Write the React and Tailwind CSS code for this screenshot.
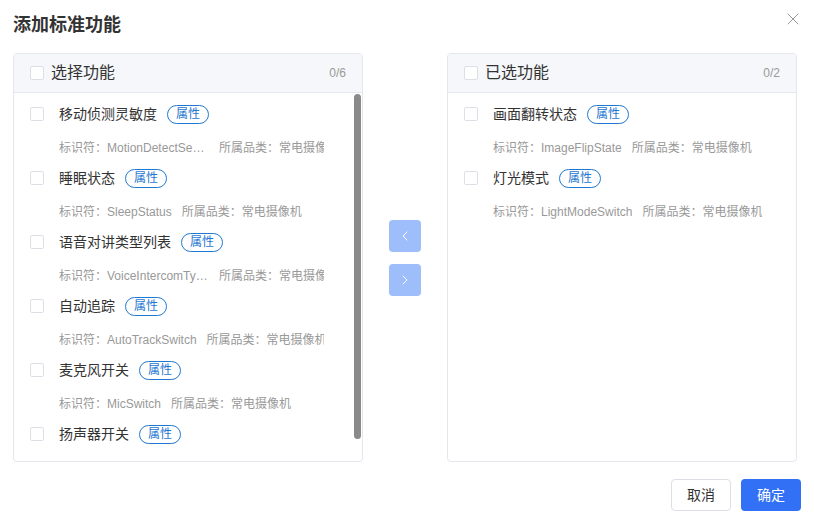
import React from 'react';
import { X, ChevronLeft, ChevronRight } from 'lucide-react';

const leftItems = [
  { name: '移动侦测灵敏度', id: 'MotionDetectSensitivity' },
  { name: '睡眠状态', id: 'SleepStatus' },
  { name: '语音对讲类型列表', id: 'VoiceIntercomTypeList' },
  { name: '自动追踪', id: 'AutoTrackSwitch' },
  { name: '麦克风开关', id: 'MicSwitch' },
  { name: '扬声器开关', id: 'SpeakerSwitch' },
];

const rightItems = [
  { name: '画面翻转状态', id: 'ImageFlipState' },
  { name: '灯光模式', id: 'LightModeSwitch' },
];

function Checkbox() {
  return <span className="w-[14px] h-[14px] shrink-0 rounded-[2px] border border-[#dcdfe6] bg-white" />;
}

function Item({ item, clip }) {
  return (
    <div className="h-[64px]">
      <div className="h-8 flex items-center">
        <Checkbox />
        <span className="ml-[15px] text-[14px] text-[#333]">{item.name}</span>
        <span className="ml-[10px] h-[19px] px-[8px] flex items-center rounded-full border border-[#1f78d1] text-[12px] text-[#1f78d1]">
          属性
        </span>
      </div>
      <div className="pt-1 h-8 flex items-center pl-[29px]">
        <div className={`flex items-center whitespace-nowrap overflow-hidden text-[12px] text-[#999] ${clip ? 'w-[265px]' : ''}`}>
          <span className="shrink-0">标识符：</span>
          <span className="shrink-0 max-w-[102px] truncate">{item.id}</span>
          <span className="shrink-0 ml-[10px]">所属品类：常电摄像机</span>
        </div>
      </div>
    </div>
  );
}

function Panel({ title, count, items, scroll }) {
  return (
    <div className="w-[350px] h-[409px] border border-[#e4e7ed] rounded-[4px] flex flex-col overflow-hidden relative">
      <div className="h-[39px] shrink-0 bg-[#f5f7fa] border-b border-[#e4e7ed] flex items-center px-4">
        <Checkbox />
        <span className="ml-[7px] text-[16px] text-[#333]">{title}</span>
        <span className="ml-auto text-[12px] text-[#999]">{count}</span>
      </div>
      <div className="flex-1 overflow-hidden pt-[5px] px-4">
        {items.map((it) => (
          <Item key={it.id} item={it} clip={scroll} />
        ))}
      </div>
      {scroll && (
        <div className="absolute right-[1px] top-[40px] w-[7px] h-[345px] rounded-full bg-[#8a8a8a]" />
      )}
    </div>
  );
}

export default function App() {
  return (
    <div
      className="w-[814px] h-[524px] bg-white flex flex-col"
      style={{ fontFamily: '"Liberation Sans", "Noto Sans CJK SC", sans-serif' }}
    >
      <div className="h-[53px] shrink-0 flex items-start px-[13px]">
        <h1 className="mt-[13px] text-[18px] leading-6 font-bold text-[#333]">添加标准功能</h1>
        <X className="ml-auto mt-[9px] -mr-[2px] text-[#999]" size={20} strokeWidth={1.2} />
      </div>
      <div className="flex items-center gap-[26px] pl-[13px]">
        <Panel title="选择功能" count="0/6" items={leftItems} scroll />
        <div className="flex flex-col gap-3">
          <div className="w-8 h-8 rounded-[4px] bg-[#9dbdfb] flex items-center justify-center">
            <ChevronLeft size={16} className="text-white" strokeWidth={1.5} />
          </div>
          <div className="w-8 h-8 rounded-[4px] bg-[#9dbdfb] flex items-center justify-center">
            <ChevronRight size={16} className="text-white" strokeWidth={1.5} />
          </div>
        </div>
        <Panel title="已选功能" count="0/2" items={rightItems} />
      </div>
      <div className="flex justify-end gap-[10px] pr-[13px] mt-[17px]">
        <button className="w-[60px] h-8 rounded-[4px] border border-[#dcdfe6] bg-white text-[14px] text-[#333]">取消</button>
        <button className="w-[60px] h-8 rounded-[4px] bg-[#3271f5] text-[14px] text-white">确定</button>
      </div>
    </div>
  );
}
